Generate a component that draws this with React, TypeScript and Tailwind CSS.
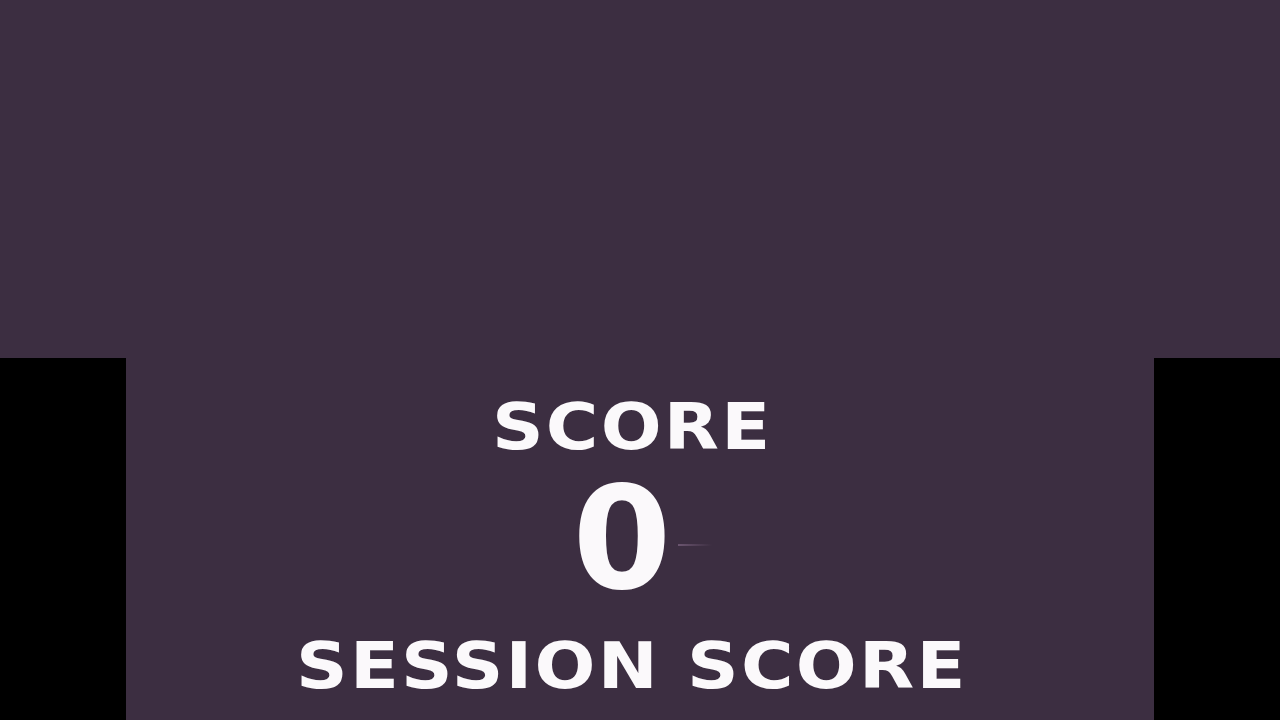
export default function App() {
  return (
    <div className="h-[720px] w-[1280px] overflow-hidden bg-black" style={{ fontFamily: '"DejaVu Sans", sans-serif' }}>
      <div className="h-[358px] w-full bg-[#3c2e41]" />
      <div className="flex h-[362px]">
        <div className="w-[126px] bg-black" />
        <div className="relative flex w-[1028px] flex-col items-center bg-[#3c2e41] pr-[16px] pt-[37px] font-bold text-[#fbf9fb]">
          <div className="scale-x-[1.12] text-[64px] leading-none tracking-[2px]">SCORE</div>
          <div className="mt-[9px] pr-[20px] text-[142px] leading-none">0</div>
          <div className="mt-[24px] scale-x-[1.12] text-[64px] leading-none tracking-[2px]">SESSION SCORE</div>
          <div className="absolute left-[552px] top-[186px] h-[2px] w-[34px] bg-gradient-to-r from-[#8a6f8e] to-transparent opacity-60" />
        </div>
        <div className="flex-1 bg-black" />
      </div>
    </div>
  );
}
